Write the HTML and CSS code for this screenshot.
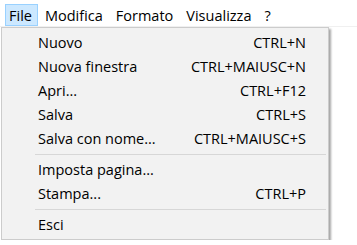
FILE: index.html
```html
<!DOCTYPE html>
<html lang="it">
<head>
    <meta charset="UTF-8">
    <meta name="viewport" content="width=device-width, initial-scale=1.0">
    <title>Blocco note</title>
    <link rel="stylesheet" href="styles.css">
</head>
<body>
    <div class="menubar">
        <span class="top-item active">File</span>
        <span class="top-item">Modifica</span>
        <span class="top-item">Formato</span>
        <span class="top-item">Visualizza</span>
        <span class="top-item">?</span>
    </div>
    <div class="dropdown">
        <div class="item"><span>Nuovo</span><span>CTRL+N</span></div>
        <div class="item"><span>Nuova finestra</span><span>CTRL+MAIUSC+N</span></div>
        <div class="item"><span>Apri...</span><span>CTRL+F12</span></div>
        <div class="item"><span>Salva</span><span>CTRL+S</span></div>
        <div class="item"><span>Salva con nome...</span><span>CTRL+MAIUSC+S</span></div>
        <div class="sep"></div>
        <div class="item"><span>Imposta pagina...</span><span></span></div>
        <div class="item"><span>Stampa...</span><span>CTRL+P</span></div>
        <div class="sep"></div>
        <div class="item"><span>Esci</span><span></span></div>
    </div>
</body>
</html>
```

FILE: styles.css
```css
*{
    margin: 0;
    padding: 0;
    box-sizing: border-box;
}
html, body{
    background: #fff;
    font-family: "Open Sans", "Noto Sans", sans-serif;
    font-size: 14.5px;
    color: #000;
}
.menubar{
    display: flex;
    height: 27px;
    padding: 4px 0 0 5px;
    border-bottom: 1px solid #f0f0f0;
}
.top-item{
    height: 22px;
    line-height: 21px;
    padding: 0 5px 0 3px;
    border: 1px solid transparent;
    margin-right: 3px;
}
.top-item.active{
    background: #cce8ff;
    border-color: #99d1ff;
}
.dropdown{
    margin-left: 1px;
    width: 328px;
    background: #f2f2f2;
    border: 1px solid #ccc;
    padding: 3px 0 2px 0;
    box-shadow: 2px 2px 2px rgba(0,0,0,0.35);
}
.item{
    display: flex;
    justify-content: space-between;
    height: 24px;
    line-height: 24px;
    padding: 0 22px 0 36px;
}
.sep{
    height: 1px;
    margin: 3px 2px 3px 33px;
    background: #d7d7d7;
}
```
